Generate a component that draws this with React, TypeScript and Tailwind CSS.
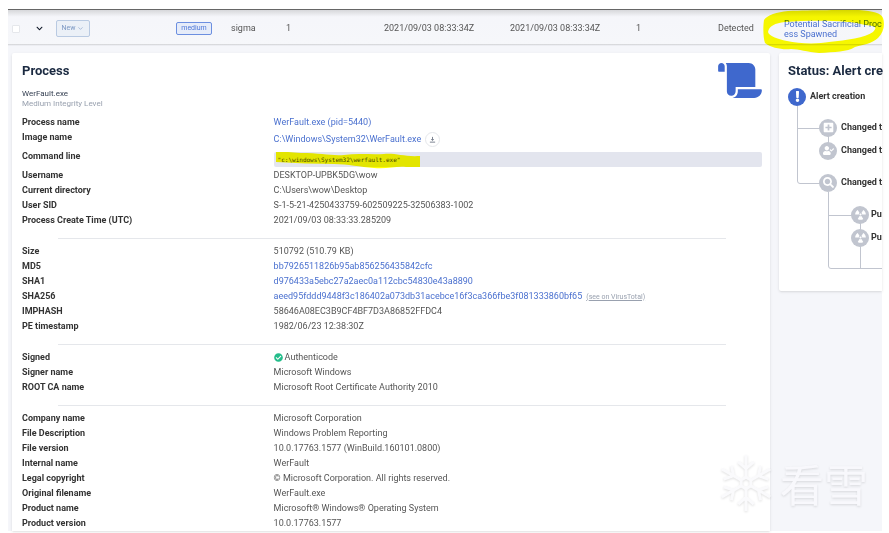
import React from 'react';
import { ChevronDown } from 'lucide-react';
import {
  FaCheckCircle,
  FaChevronDown,
  FaExclamation,
  FaPlusSquare,
  FaRadiation,
  FaScroll,
  FaSearch,
  FaUserCheck,
} from 'react-icons/fa';

type Field = { label: string; value: React.ReactNode; tall?: boolean };

const link = 'text-[#4a70cf] hover:underline';

const sections: Field[][] = [
  [
    { label: 'Process name', value: <a href="#process" className={link}>WerFault.exe (pid=5440)</a> },
    {
      label: 'Image name',
      tall: true,
      value: (
        <span className="flex items-center gap-1 pt-0.5">
          <a href="#image" className={link}>C:\Windows\System32\WerFault.exe</a>
          <button aria-label="Download" className="flex size-[15px] items-center justify-center rounded-full border border-gray-200 bg-white text-gray-500">
            <svg viewBox="0 0 8 8" className="size-[7px]" fill="none" stroke="currentColor">
              <path d="M4 1v4M2.500 3.500L4 5l1.500-1.500M1 7h6" />
            </svg>
          </button>
        </span>
      ),
    },
    {
      label: 'Command line',
      tall: true,
      value: (
        <code className="relative mt-[3px] block h-[15px] rounded-xs bg-[#e3e5ee] px-1 font-['DejaVu_Sans_Mono',monospace] text-[6px] leading-[15px] text-[#444]">
          &quot;c:\windows\System32\werfault.exe&quot;
          <svg viewBox="0 0 144 18" className="absolute top-0 left-0.5 h-[18px] w-36 mix-blend-multiply">
            <path
              d="M0 0H12C16 0 20 1 25 1C45 1 55 4 68 3C82 1 96 3 108 2C120 1 128 5 144 4V15H130C120 14 112 17 98 16C84 15 72 12 58 12C40 12 20 11 0 10Z"
              fill="#ffff00"
            />
          </svg>
        </code>
      ),
    },
    { label: 'Username', value: 'DESKTOP-UPBK5DG\\wow' },
    { label: 'Current directory', value: 'C:\\Users\\wow\\Desktop' },
    { label: 'User SID', value: 'S-1-5-21-4250433759-602509225-32506383-1002' },
    { label: 'Process Create Time (UTC)', value: '2021/09/03 08:33:33.285209' },
  ],
  [
    { label: 'Size', value: '510792 (510.79 KB)' },
    { label: 'MD5', value: <a href="#md5" className={link}>bb7926511826b95ab856256435842cfc</a> },
    { label: 'SHA1', value: <a href="#sha1" className={link}>d976433a5ebc27a2aec0a112cbc54830e43a8890</a> },
    {
      label: 'SHA256',
      value: (
        <>
          <a href="#sha256" className={link}>aeed95fddd9448f3c186402a073db31acebce16f3ca366fbe3f081333860bf65</a>
          <a href="#virustotal" className="ml-1 text-[7px] text-gray-400 underline">(see on VirusTotal)</a>
        </>
      ),
    },
    { label: 'IMPHASH', value: '58646A08EC3B9CF4BF7D3A86852FFDC4' },
    { label: 'PE timestamp', value: '1982/06/23 12:38:30Z' },
  ],
  [
    {
      label: 'Signed',
      value: (
        <span className="flex items-center gap-0.5">
          <FaCheckCircle className="size-[9px] text-[#24bd8b]" />
          Authenticode
        </span>
      ),
    },
    { label: 'Signer name', value: 'Microsoft Windows' },
    { label: 'ROOT CA name', value: 'Microsoft Root Certificate Authority 2010' },
  ],
  [
    { label: 'Company name', value: 'Microsoft Corporation' },
    { label: 'File Description', value: 'Windows Problem Reporting' },
    { label: 'File version', value: '10.0.17763.1577 (WinBuild.160101.0800)' },
    { label: 'Internal name', value: 'WerFault' },
    { label: 'Legal copyright', value: '© Microsoft Corporation. All rights reserved.' },
    { label: 'Original filename', value: 'WerFault.exe' },
    { label: 'Product name', value: 'Microsoft® Windows® Operating System' },
    { label: 'Product version', value: '10.0.17763.1577' },
  ],
];

const events = [
  { label: 'Alert creation', icon: FaExclamation, style: 'gap-1', dot: 'bg-[#3f68cd]' },
  { label: 'Changed t', icon: FaPlusSquare, style: 'gap-1 mt-[13px] pl-[31px]', dot: 'bg-[#c1c5cf]' },
  { label: 'Changed t', icon: FaUserCheck, style: 'gap-1 mt-[5px] pl-[31px]', dot: 'bg-[#c1c5cf]' },
  { label: 'Changed t', icon: FaSearch, style: 'gap-1 mt-[14px] pl-[31px]', dot: 'bg-[#c1c5cf]' },
  { label: 'Pu', icon: FaRadiation, style: 'gap-0.5 mt-[14px] pl-[63px]', dot: 'bg-[#c1c5cf]' },
  { label: 'Pu', icon: FaRadiation, style: 'gap-0.5 mt-[5px] pl-[63px]', dot: 'bg-[#c1c5cf]' },
];

function AlertRow() {
  return (
    <table className="w-full table-fixed text-left">
      <colgroup>
        <col className="w-[28px]" />
        <col className="w-[20px]" />
        <col className="w-[120px]" />
        <col className="w-[55px]" />
        <col className="w-[55px]" />
        <col className="w-[98px]" />
        <col className="w-[126px]" />
        <col className="w-[126px]" />
        <col className="w-[82px]" />
        <col className="w-[66px]" />
        <col className="w-[98px]" />
      </colgroup>
      <tbody>
        <tr className="h-[35px] border-b border-[#ecedf2] bg-linear-to-b from-[#d6d7da] via-[#f5f6fa] via-20% to-[#f6f7fa] *:pt-[3px]">
          <td>
            <input type="checkbox" aria-label="Select alert" className="ml-1 block size-2 appearance-none rounded-[1px] border border-gray-200 bg-white" />
          </td>
          <td>
            <button aria-label="Collapse" className="flex text-gray-900">
              <FaChevronDown className="size-[7px]" />
            </button>
          </td>
          <td>
            <button className="flex h-[17px] w-[34px] items-center justify-center gap-0.5 rounded-xs border border-[#b9cae2] bg-[#ebf0f7] text-[7px] text-[#7d99c4]">
              New <ChevronDown className="size-[7px]" />
            </button>
          </td>
          <td>
            <span className="flex h-[13px] w-9 items-center justify-center rounded-xs border border-[#6c8fe0] bg-[#e6ecf9] text-[7px] text-[#4f78d8]">medium</span>
          </td>
          <td>sigma</td>
          <td>1</td>
          <td>2021/09/03 08:33:34Z</td>
          <td>2021/09/03 08:33:34Z</td>
          <td>1</td>
          <td>Detected</td>
          <td className="relative">
            <a href="#rule" className={`block leading-[10px] whitespace-nowrap ${link}`}>
              Potential Sacrificial Proc
              <br />
              ess Spawned
            </a>
            <svg viewBox="0 0 122 44" className="absolute top-0 -left-[21px] h-11 w-[122px] mix-blend-multiply">
              <path
                fillRule="evenodd"
                fill="#ffff00"
                d="M1 10C4 5 14 2 25 1C50 0 80 0 96 0C110 1 118 3 120 8C122 14 121 22 115 28C108 34 102 34 92 37C84 42 72 42 56 43C44 42 36 39 28 39C20 40 8 38 2 33C0 28 0 16 1 10ZM5 22C6 16 12 13 22 12C50 10 86 10 102 15C112 16 115 17 110 22C102 28 84 30 66 32C56 34 36 34 24 31C14 29 6 26 5 22Z"
              />
            </svg>
          </td>
        </tr>
      </tbody>
    </table>
  );
}

function ProcessCard() {
  return (
    <section className="rounded-t-xs bg-white pt-[10px] pr-2 pl-[10px] shadow-sm">
      <header className="flex h-[52px] items-start justify-between">
        <div>
          <h2 className="text-[13px] leading-4 font-bold text-[#1b2a41]">Process</h2>
          <p className="mt-[10px] text-[8px] leading-[10px] text-gray-700">WerFault.exe</p>
          <p className="text-[8px] leading-[10px] text-gray-400">Medium Integrity Level</p>
        </div>
        <FaScroll className="h-[35px] w-11 text-[#3f68cd]" />
      </header>
      {sections.map((fields, i) => (
        <React.Fragment key={i}>
          {i > 0 && <hr className="mx-9 mt-[10px] mb-[5px] border-gray-200" />}
          <dl>
            {fields.map(field => (
              <div key={field.label} className={`grid grid-cols-[34%_66%] ${field.tall ? 'h-[19px]' : 'h-[15px]'}`}>
                <dt className="font-bold text-[#333]">{field.label}</dt>
                <dd className="whitespace-nowrap">{field.value}</dd>
              </div>
            ))}
          </dl>
        </React.Fragment>
      ))}
    </section>
  );
}

function StatusCard() {
  return (
    <section className="self-start rounded-l-xs bg-white pt-[10px] pb-5 pl-[9px] whitespace-nowrap shadow-sm">
      <h2 className="text-[13px] leading-4 font-bold text-[#1b2a41]">Status: Alert cre</h2>
      <div className="relative mt-[9px] overflow-hidden pb-6">
        {/* Connector lines */}
        <svg className="absolute top-0 left-0 h-[182px] w-40" fill="none" stroke="#c1c5cf">
          <path d="M9.500 18V93Q9.500 95.500 12 95.500H32M9.500 40.500H32M40.500 48V56" />
          <path d="M40.500 104V178Q40.500 180.500 43 180.500H160M40.500 127.500H64M72.500 130V180" />
        </svg>
        <ul className="relative">
          {events.map((event, i) => (
            <li key={i} className={`flex h-[18px] items-center font-bold text-[#333] ${event.style}`}>
              <span className={`flex size-[18px] shrink-0 items-center justify-center rounded-full text-white ${event.dot}`}>
                <event.icon className="size-[11px]" />
              </span>
              {event.label}
            </li>
          ))}
        </ul>
      </div>
    </section>
  );
}

function Watermark() {
  return (
    <div className="pointer-events-none absolute right-[14px] bottom-4 flex h-16 items-center gap-2 drop-shadow-[0_1px_1px_rgba(0,0,0,0.12)]">
      <svg viewBox="-27 -31 54 62" className="h-[60px] w-[52px]" fill="none" stroke="#fafafc" strokeWidth="3">
        <path d="M0 -6L5 -3V3L0 6L-5 3V-3Z" />
        {[0, 60, 120, 180, 240, 300].map(angle => (
          <path key={angle} d="M0 -6V-29M-8 -22L0 -15L8 -22" transform={`rotate(${angle})`} />
        ))}
      </svg>
      <span className="font-['Noto_Sans_CJK_SC',sans-serif] text-[44px] leading-[64px] text-[#f8f8fc]">看雪</span>
    </div>
  );
}

export default function App() {
  return (
    <div className="bg-white pt-[9px] pr-[7px] pb-0.5 pl-2 font-[Roboto,sans-serif] text-[9px] leading-[15px] text-[#555]">
      <main className="relative border-t border-[#666] bg-[#f5f6fa]">
        <AlertRow />
        <div className="grid grid-cols-[minmax(0,758fr)_minmax(0,103fr)] gap-[9px] pt-[7px] pl-1">
          <ProcessCard />
          <StatusCard />
        </div>
        <Watermark />
      </main>
    </div>
  );
}
